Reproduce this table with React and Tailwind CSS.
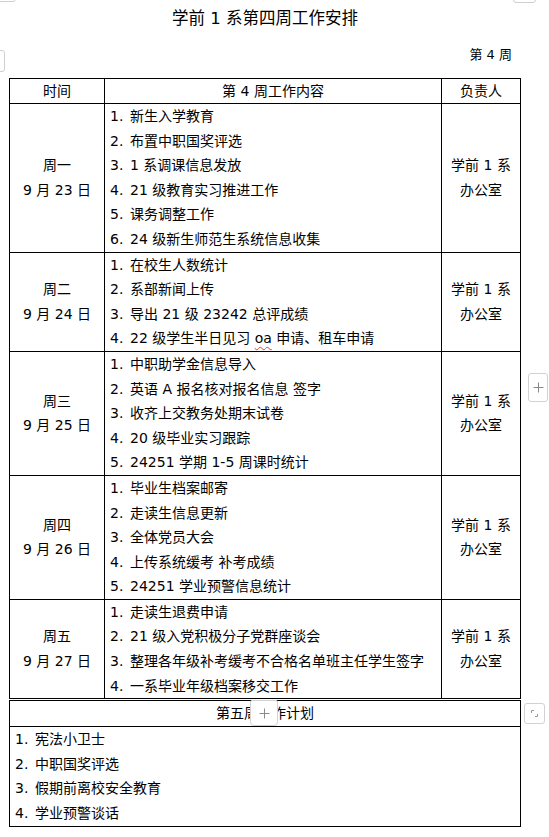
import React from "react";

const days = [
  {
    day: "周一",
    date: "9 月 23 日",
    items: [
      "新生入学教育",
      "布置中职国奖评选",
      "1 系调课信息发放",
      "21 级教育实习推进工作",
      "课务调整工作",
      "24 级新生师范生系统信息收集",
    ],
  },
  {
    day: "周二",
    date: "9 月 24 日",
    items: [
      "在校生人数统计",
      "系部新闻上传",
      "导出 21 级 23242 总评成绩",
      "OA",
    ],
  },
  {
    day: "周三",
    date: "9 月 25 日",
    items: [
      "中职助学金信息导入",
      "英语 A 报名核对报名信息 签字",
      "收齐上交教务处期末试卷",
      "20 级毕业实习跟踪",
      "24251 学期 1-5 周课时统计",
    ],
  },
  {
    day: "周四",
    date: "9 月 26 日",
    items: [
      "毕业生档案邮寄",
      "走读生信息更新",
      "全体党员大会",
      "上传系统缓考 补考成绩",
      "24251 学业预警信息统计",
    ],
  },
  {
    day: "周五",
    date: "9 月 27 日",
    items: [
      "走读生退费申请",
      "21 级入党积极分子党群座谈会",
      "整理各年级补考缓考不合格名单班主任学生签字",
      "一系毕业年级档案移交工作",
    ],
  },
];

const nextWeek = ["宪法小卫士", "中职国奖评选", "假期前离校安全教育", "学业预警谈话"];

function Item({ n, text }) {
  return (
    <div className="flex whitespace-nowrap">
      <span className="inline-block w-[20px] shrink-0">{n}.</span>
      {text === "OA" ? (
        <span>
          22 级学生半日见习{" "}
          <span className="underline decoration-wavy decoration-[#e53935] decoration-1 underline-offset-[3px]">
            oa
          </span>{" "}
          申请、租车申请
        </span>
      ) : (
        <span>{text}</span>
      )}
    </div>
  );
}

function PlusIcon() {
  return (
    <svg width="11" height="11" viewBox="0 0 11 11">
      <path d="M5.5 0.5 V10.5 M0.5 5.5 H10.5" stroke="#8a8a8a" strokeWidth="1" fill="none" />
    </svg>
  );
}

export default function App() {
  return (
    <div className="relative w-[549px] h-[837px] overflow-hidden bg-white text-black [font-family:'DejaVu_Sans','Noto_Sans_CJK_SC',sans-serif] text-[14px] leading-[24.6px]">
      <div className="ml-[9px] w-[512px] flex flex-col">
        <div className="pt-[6px] h-[31px] text-center text-[16.5px] leading-[25px]">
          学前 1 系第四周工作安排
        </div>
        <div className="mt-[11px] h-[25px] pr-[9px] text-right text-[13px] leading-[25px]">
          第 4 周
        </div>
        <div className="mt-[11px] border border-black">
          <div className="grid grid-cols-[95px_337px_78px] h-[24px] leading-[24px] text-center">
            <div className="border-r border-black">时间</div>
            <div className="border-r border-black">第 4 周工作内容</div>
            <div>负责人</div>
          </div>
          {days.map((d) => (
            <div key={d.day} className="grid grid-cols-[95px_337px_78px] border-t border-black">
              <div className="border-r border-black flex flex-col items-center justify-center text-center">
                <div>{d.day}</div>
                <div>{d.date}</div>
              </div>
              <div className="border-r border-black pl-[5px] flex flex-col">
                {d.items.map((t, i) => (
                  <Item key={i} n={i + 1} text={t} />
                ))}
              </div>
              <div className="flex flex-col items-center justify-center text-center">
                <div>学前 1 系</div>
                <div>办公室</div>
              </div>
            </div>
          ))}
        </div>
        <div className="mt-[1px] border border-black">
          <div className="h-[25px] leading-[25px] text-center">第五周工作计划</div>
          <div className="border-t border-black pl-[5px] flex flex-col">
            {nextWeek.map((t, i) => (
              <Item key={i} n={i + 1} text={t} />
            ))}
          </div>
        </div>
      </div>

      {/* editor overlay controls */}
      <div className="absolute left-[-6px] top-[-20px] w-[22px] h-[22px] rounded-[3px] border border-[#cfcfcf]" />
      <div className="absolute left-[-20px] top-[50px] w-[25px] h-[22px] rounded-[3px] border border-[#cfcfcf]" />
      <div className="absolute left-[513px] top-[-20px] w-[23px] h-[23px] rounded-[3px] border border-[#cfcfcf]" />
      <div className="absolute left-[528px] top-[373px] w-[20px] h-[29px] rounded-[3px] border border-[#d2d2d2] bg-white flex items-center justify-center">
        <PlusIcon />
      </div>
      <div className="absolute left-[250px] top-[700px] w-[28px] h-[26px] rounded-b-[4px] rounded-t-[2px] border border-[#d2d2d2] bg-white flex items-center justify-center">
        <PlusIcon />
      </div>
      <div className="absolute left-[524px] top-[703px] w-[21px] h-[21px] rounded-[3px] border border-[#d2d2d2] bg-white flex items-center justify-center">
        <svg width="11" height="11" viewBox="0 0 11 11">
          <path d="M2.5 5 V2.5 H5 M8.5 6 V8.5 H6" stroke="#9a9a9a" strokeWidth="1" fill="none" />
        </svg>
      </div>
    </div>
  );
}
